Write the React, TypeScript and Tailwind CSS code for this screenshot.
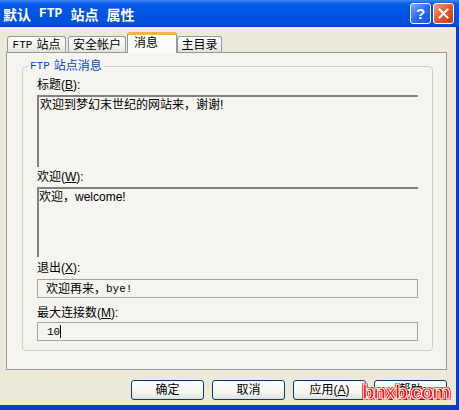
import React from 'react';

const Tab = ({ label, className }: { label: React.ReactNode; className: string }) => (
  <div
    className={`h-[16px] flex items-center justify-center border border-b-0 border-[#919b9c] rounded-t-[3px] bg-[linear-gradient(to_bottom,#ffffff,#f3f2ee_60%,#e4e2da)] ${className}`}
  >
    {label}
  </div>
);

const Button = ({ children }: { children: React.ReactNode }) => (
  <div className="w-[73px] h-[20px] flex items-center justify-center border border-[#003c74] rounded-[3px] bg-[linear-gradient(to_bottom,#ffffff,#f5f5f1_65%,#e2e0d5)]">
    {children}
  </div>
);

const Mono = ({ children }: { children: React.ReactNode }) => (
  <span className="font-['Liberation_Mono',monospace] text-[11px]">{children}</span>
);

export default function App() {
  return (
    <div className="relative w-[459px] h-[410px] flex flex-col overflow-hidden bg-[#ece9d8] text-[12px] leading-[14px] text-black font-['Liberation_Sans','Noto_Sans_CJK_SC',sans-serif]">
      {/* Title bar */}
      <div className="h-[27px] shrink-0 flex items-center pl-[3px] pr-[5px] bg-[linear-gradient(to_bottom,#3d8af7_0%,#0a5ae8_14%,#0054e3_50%,#0050dc_88%,#0040c8_100%)]">
        <div className="flex items-center gap-[8px] text-white font-bold text-[14px] leading-[16px] font-['Noto_Sans_CJK_SC',sans-serif]">
          <span>默认</span>
          <span className="font-['Liberation_Mono',monospace] text-[13px]">FTP</span>
          <span>站点</span>
          <span>属性</span>
        </div>
        <div className="ml-auto flex gap-[2px]">
          <div className="w-[21px] h-[21px] flex items-center justify-center rounded-[3px] border border-white bg-[linear-gradient(135deg,#7aaaff,#2c6cf0_50%,#1c52d4)] text-white font-bold text-[15px] leading-[15px] font-['Liberation_Sans',sans-serif]">
            ?
          </div>
          <div className="w-[21px] h-[21px] flex items-center justify-center rounded-[3px] border border-white bg-[linear-gradient(135deg,#f3a184,#e1582f_50%,#c43a1a)]">
            <svg width="11" height="11" viewBox="0 0 11 11">
              <path d="M1.5 1.5 L9.5 9.5 M9.5 1.5 L1.5 9.5" stroke="#fff" strokeWidth="2" strokeLinecap="square" />
            </svg>
          </div>
        </div>
      </div>

      {/* Body */}
      <div className="flex-1 flex flex-col pl-[6px] pr-[9px] pt-[5px] border-r-[3px] border-b-[5px] border-[#0b3bc4]">
        {/* Tabs */}
        <div className="h-[20px] flex items-end">
          <Tab
            className="ml-[1px] w-[59px] gap-[4px]"
            label={
              <>
                <Mono>FTP</Mono>
                <span>站点</span>
              </>
            }
          />
          <Tab className="ml-[2px] w-[58px]" label="安全帐户" />
          <div className="relative z-10 -mb-px ml-[1px] w-[50px] h-[21px] flex items-center pl-[6px] pb-[2px] border border-b-0 border-[#919b9c] border-t-[3px] border-t-[#f5b640] rounded-t-[3px] bg-[#fbfbf9]">
            消息
          </div>
          <Tab className="w-[45px]" label="主目录" />
        </div>

        {/* Tab panel */}
        <div className="h-[318px] border border-[#919b9c] bg-[#f5f4ef] pt-[6px] pl-[15px] pr-[13px]">
          <fieldset className="border border-[#d0d0bf] rounded-[4px]">
            <legend className="ml-[5px] px-[2px] text-[#0046d5] flex items-center gap-[4px]">
              <Mono>FTP</Mono>
              <span>站点消息</span>
            </legend>
            <div className="flex flex-col px-[14px] pt-[5px] pb-[9px]">
              <div>
                标题(<span className="underline">B</span>):
              </div>
              <div className="mt-[3px] h-[72px] border-t-2 border-l-2 border-[#828282] pl-[1px] pt-[1px]">
                欢迎到梦幻末世纪的网站来，谢谢!
              </div>
              <div className="mt-[3px]">
                欢迎(<span className="underline">W</span>):
              </div>
              <div className="mt-[3px] h-[70px] border-t-2 border-l-2 border-[#828282] pt-[1px]">
                欢迎，welcome!
              </div>
              <div className="mt-[4px]">
                退出(<span className="underline">X</span>):
              </div>
              <div className="mt-[4px] h-[19px] flex items-center border border-[#a3a3a3] pl-[8px]">
                <span>欢迎再来，</span>
                <Mono>bye!</Mono>
              </div>
              <div className="mt-[8px]">
                最大连接数(<span className="underline">M</span>):
              </div>
              <div className="mt-[2px] h-[19px] flex items-center border border-[#a3a3a3] pl-[9px]">
                <Mono>10</Mono>
                <span className="inline-block w-px h-[13px] bg-black" />
              </div>
            </div>
          </fieldset>
        </div>

        {/* Buttons */}
        <div className="mt-[10px] flex justify-end gap-[8px]">
          <Button>确定</Button>
          <Button>取消</Button>
          <Button>
            应用(<span className="underline">A</span>)
          </Button>
          <Button>帮助</Button>
        </div>
      </div>

      {/* Watermark */}
      <div className="absolute left-[362px] top-[380px] text-[21px] leading-[24px] font-bold tracking-[-1.5px] text-[#ff0000] font-['Liberation_Sans',sans-serif] [-webkit-text-stroke:1px_#ffffff] [text-shadow:1px_1px_0_#f00,-1px_-1px_0_#f00,1px_-1px_0_#f00,-1px_1px_0_#f00,0_1px_0_#f00,0_-1px_0_#f00,1px_0_0_#f00,-1px_0_0_#f00]">
        bnxb.com
      </div>
    </div>
  );
}
